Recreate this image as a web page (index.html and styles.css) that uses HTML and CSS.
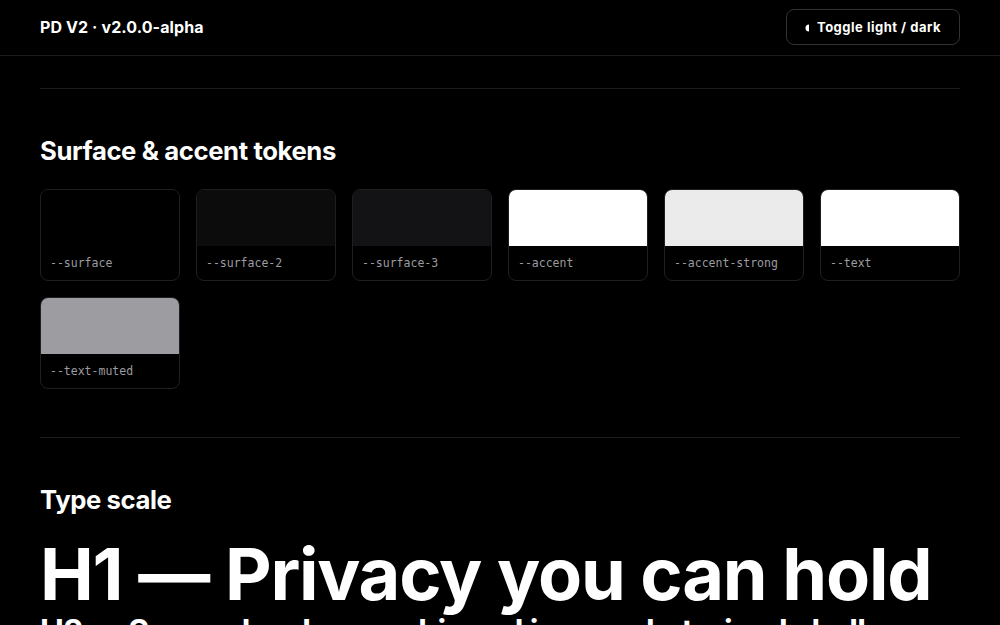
FILE: index.html
```html
<!DOCTYPE html>
<html lang="en">
<head>
  <meta charset="UTF-8">
  <title>PD V2 · Design tokens</title>
  <link rel="stylesheet" href="styles.css">
</head>
<body>

  <header class="topbar">
    <div class="brand">PD V2 · v2.0.0-alpha</div>
    <button class="theme-toggle" type="button">
      <svg class="half-moon" width="6" height="8" viewBox="0 0 6 8"><path d="M5 0.5 A3.5 3.5 0 0 0 5 7.5 Z" fill="#fff"/></svg>
      Toggle light / dark
    </button>
  </header>

  <main class="page">
    <hr class="rule">

    <section class="block">
      <h2>Surface &amp; accent tokens</h2>
      <div class="swatches">
        <div class="swatch"><div class="chip" style="background:#000000"></div><code>--surface</code></div>
        <div class="swatch"><div class="chip" style="background:#0c0c0d"></div><code>--surface-2</code></div>
        <div class="swatch"><div class="chip" style="background:#131315"></div><code>--surface-3</code></div>
        <div class="swatch"><div class="chip" style="background:#ffffff"></div><code>--accent</code></div>
        <div class="swatch"><div class="chip" style="background:#ebebeb"></div><code>--accent-strong</code></div>
        <div class="swatch"><div class="chip" style="background:#ffffff"></div><code>--text</code></div>
        <div class="swatch"><div class="chip" style="background:#9d9ca1"></div><code>--text-muted</code></div>
      </div>
    </section>

    <hr class="rule">

    <section class="block">
      <h2>Type scale</h2>
      <h1 class="t-h1">H1 — Privacy you can hold</h1>
      <p class="t-h2">H2 — Secure hardware, shipped in a pocket-sized shell</p>
    </section>
  </main>

</body>
</html>
```

FILE: styles.css
```css
* {
  box-sizing: border-box;
}
body {
  margin: 0;
  background: #000;
  color: #fff;
  font-family: Inter, 'Noto Sans', sans-serif;
}
.topbar {
  height: 56px;
  padding: 0 40px;
  display: flex;
  align-items: center;
  justify-content: space-between;
  border-bottom: 1px solid #1c1c1e;
}
.brand {
  font-size: 16px;
  font-weight: 700;
  letter-spacing: 0.1px;
  margin-top: -1px;
}
.theme-toggle {
  display: flex;
  align-items: center;
  gap: 7px;
  height: 36px;
  margin-top: -1px;
  padding: 0 18px 0 17px;
  background: transparent;
  color: #fff;
  border: 1px solid #333336;
  border-radius: 8px;
  font-family: Inter, sans-serif;
  font-size: 13px;
  font-weight: 700;
  letter-spacing: 0.5px;
  cursor: pointer;
}
.half-moon {
  margin-top: 1px;
}
.page {
  padding: 32px 40px 0;
}
.rule {
  margin: 0;
  border: none;
  border-top: 1px solid #1c1c1e;
}
.block {
  padding-top: 46px;
  padding-bottom: 48px;
}
h2 {
  margin: 0 0 23px;
  font-size: 25.7px;
  font-weight: 700;
  letter-spacing: -0.4px;
}
.swatches {
  display: grid;
  grid-template-columns: repeat(6, 1fr);
  gap: 16px;
}
.swatch {
  height: 92px;
  border: 1px solid #1f1f21;
  border-radius: 8px;
  overflow: hidden;
  background: #000;
}
.chip {
  height: 56px;
}
.swatch code {
  display: block;
  padding: 10px 9px 0;
  font-family: 'DejaVu Sans Mono', monospace;
  font-size: 11.5px;
  color: #9d9ca1;
}
.t-h1 {
  margin: 7px 0 0;
  font-size: 72px;
  font-weight: 700;
  letter-spacing: -1.2px;
  line-height: 1;
}
.t-h2 {
  margin: 2px 0 0;
  font-size: 32px;
  font-weight: 700;
  letter-spacing: -0.6px;
}
```
